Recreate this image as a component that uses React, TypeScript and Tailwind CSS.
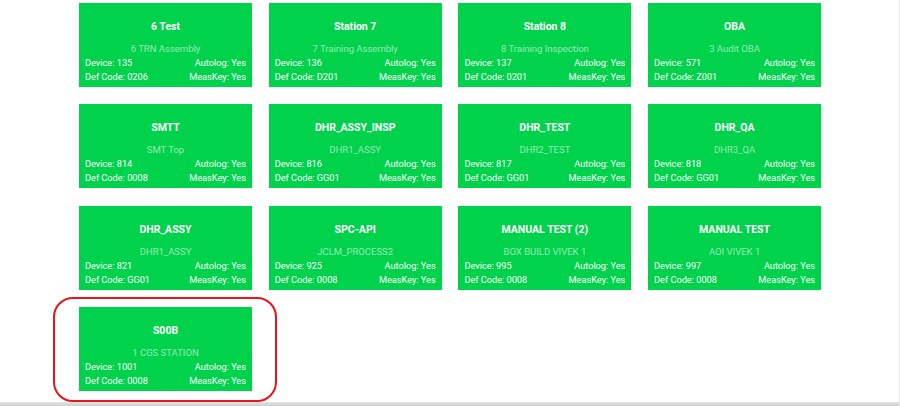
import React from "react";

type Station = { title: string; sub: string; device: string; code: string };

const stations: Station[] = [
  { title: "6 Test", sub: "6 TRN Assembly", device: "135", code: "0206" },
  { title: "Station 7", sub: "7 Training Assembly", device: "136", code: "D201" },
  { title: "Station 8", sub: "8 Training Inspection", device: "137", code: "0201" },
  { title: "OBA", sub: "3 Audit OBA", device: "571", code: "Z001" },
  { title: "SMTT", sub: "SMT Top", device: "814", code: "0008" },
  { title: "DHR_ASSY_INSP", sub: "DHR1_ASSY", device: "816", code: "GG01" },
  { title: "DHR_TEST", sub: "DHR2_TEST", device: "817", code: "GG01" },
  { title: "DHR_QA", sub: "DHR3_QA", device: "818", code: "GG01" },
  { title: "DHR_ASSY", sub: "DHR1_ASSY", device: "821", code: "GG01" },
  { title: "SPC-API", sub: "JCLM_PROCESS2", device: "925", code: "0008" },
  { title: "MANUAL TEST (2)", sub: "BOX BUILD VIVEK 1", device: "995", code: "0008" },
  { title: "MANUAL TEST", sub: "AOI VIVEK 1", device: "997", code: "0008" },
  { title: "S00B", sub: "1 CGS STATION", device: "1001", code: "0008" },
];

function Card({ s }: { s: Station }) {
  return (
    <div className="h-[84px] bg-[#00d24b] text-white flex flex-col pt-[17px] px-[6px]">
      <div className="text-center text-[10.5px] leading-[14px] font-bold">{s.title}</div>
      <div className="mt-[8px] text-center text-[9.5px] leading-[14px] text-white/55">{s.sub}</div>
      <div className="flex justify-between text-[9.2px] leading-[14px]">
        <span>Device: {s.device}</span>
        <span>Autolog: Yes</span>
      </div>
      <div className="flex justify-between text-[9.2px] leading-[14px]">
        <span>Def Code: {s.code}</span>
        <span>MeasKey: Yes</span>
      </div>
    </div>
  );
}

export default function App() {
  return (
    <div
      className="w-[900px] h-[406px] bg-white flex flex-col overflow-hidden relative border-r border-[#e6e6e6]"
      style={{ fontFamily: "Roboto, 'Liberation Sans', sans-serif" }}
    >
      <div className="flex-1 pl-[79px] pt-[3px]">
        <div className="grid grid-cols-[repeat(4,173px)] gap-x-[16.7px] gap-y-[17.4px]">
          {stations.map((s) => (
            <Card key={s.title + s.device} s={s} />
          ))}
        </div>
      </div>
      <div className="h-[4px] bg-gradient-to-b from-[#e4e4e4] to-[#cfcfcf]" />
      <div className="absolute left-[53px] top-[297px] w-[224px] h-[105px] rounded-[20px] border-2 border-[#e8141b]" />
    </div>
  );
}
